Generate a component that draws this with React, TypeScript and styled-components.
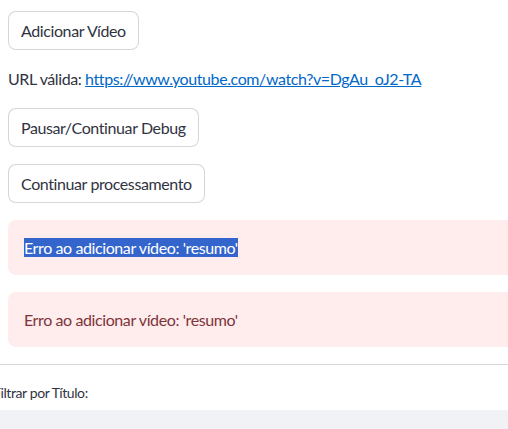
import React from "react";
import styled, { createGlobalStyle } from "styled-components";

const Global = createGlobalStyle`
  html, body { margin: 0; padding: 0; background: #ffffff; overflow: hidden; }
  body { font-family: "Lato", "Noto Sans", sans-serif; color: rgb(49, 51, 63); letter-spacing: -0.4px; }
`;

const Page = styled.div`
  width: 508px;
  height: 429px;
  overflow: hidden;
  padding: 11px 0 0 8px;
  box-sizing: border-box;
  display: flex;
  flex-direction: column;
  gap: 17px;
  & > * { flex-shrink: 0; }
`;

const Button = styled.button`
  align-self: flex-start;
  height: 39px;
  padding: 0 12px;
  box-sizing: border-box;
  border: 1px solid rgba(49, 51, 63, 0.2);
  border-radius: 8px;
  background: #ffffff;
  color: rgb(49, 51, 63);
  font-family: inherit;
  letter-spacing: inherit;
  font-size: 16px;
  cursor: pointer;
`;

const Line = styled.p`
  margin: 0;
  font-size: 16px;
  line-height: 24px;
`;

const Link = styled.a`
  color: rgb(0, 104, 201);
  text-decoration: underline;
`;

const Alert = styled.div`
  width: 700px;
  height: 55px;
  box-sizing: border-box;
  padding: 16px 16px 15px;
  border-radius: 8px;
  background: #ffecec;
  color: rgb(125, 53, 59);
  font-size: 16px;
  line-height: 24px;
`;

const Selected = styled.span`
  background: rgb(51, 101, 204);
  color: #ffffff;
`;

const Divider = styled.hr`
  margin: 0 0 0 -8px;
  width: 600px;
  border: none;
  border-top: 1px solid rgba(49, 51, 63, 0.2);
`;

const FilterBlock = styled.div`
  margin: 1px 0 0 -16px;
  display: flex;
  flex-direction: column;
  gap: 7px;
`;

const Label = styled.label`
  margin-left: 1px;
  font-size: 14px;
  line-height: 20px;
`;

const Input = styled.div`
  width: 600px;
  height: 40px;
  background: rgb(240, 242, 246);
  border-radius: 8px;
`;

export default function App() {
  return (
    <>
      <Global />
      <Page>
        <Button>Adicionar Vídeo</Button>
        <Line>
          URL válida:{" "}
          <Link href="#">https://www.youtube.com/watch?v=DgAu_oJ2-TA</Link>
        </Line>
        <Button>Pausar/Continuar Debug</Button>
        <Button>Continuar processamento</Button>
        <Alert>
          <Selected>Erro ao adicionar vídeo: 'resumo'</Selected>
        </Alert>
        <Alert>Erro ao adicionar vídeo: 'resumo'</Alert>
        <Divider />
        <FilterBlock>
          <Label>Filtrar por Título:</Label>
          <Input />
        </FilterBlock>
      </Page>
    </>
  );
}
